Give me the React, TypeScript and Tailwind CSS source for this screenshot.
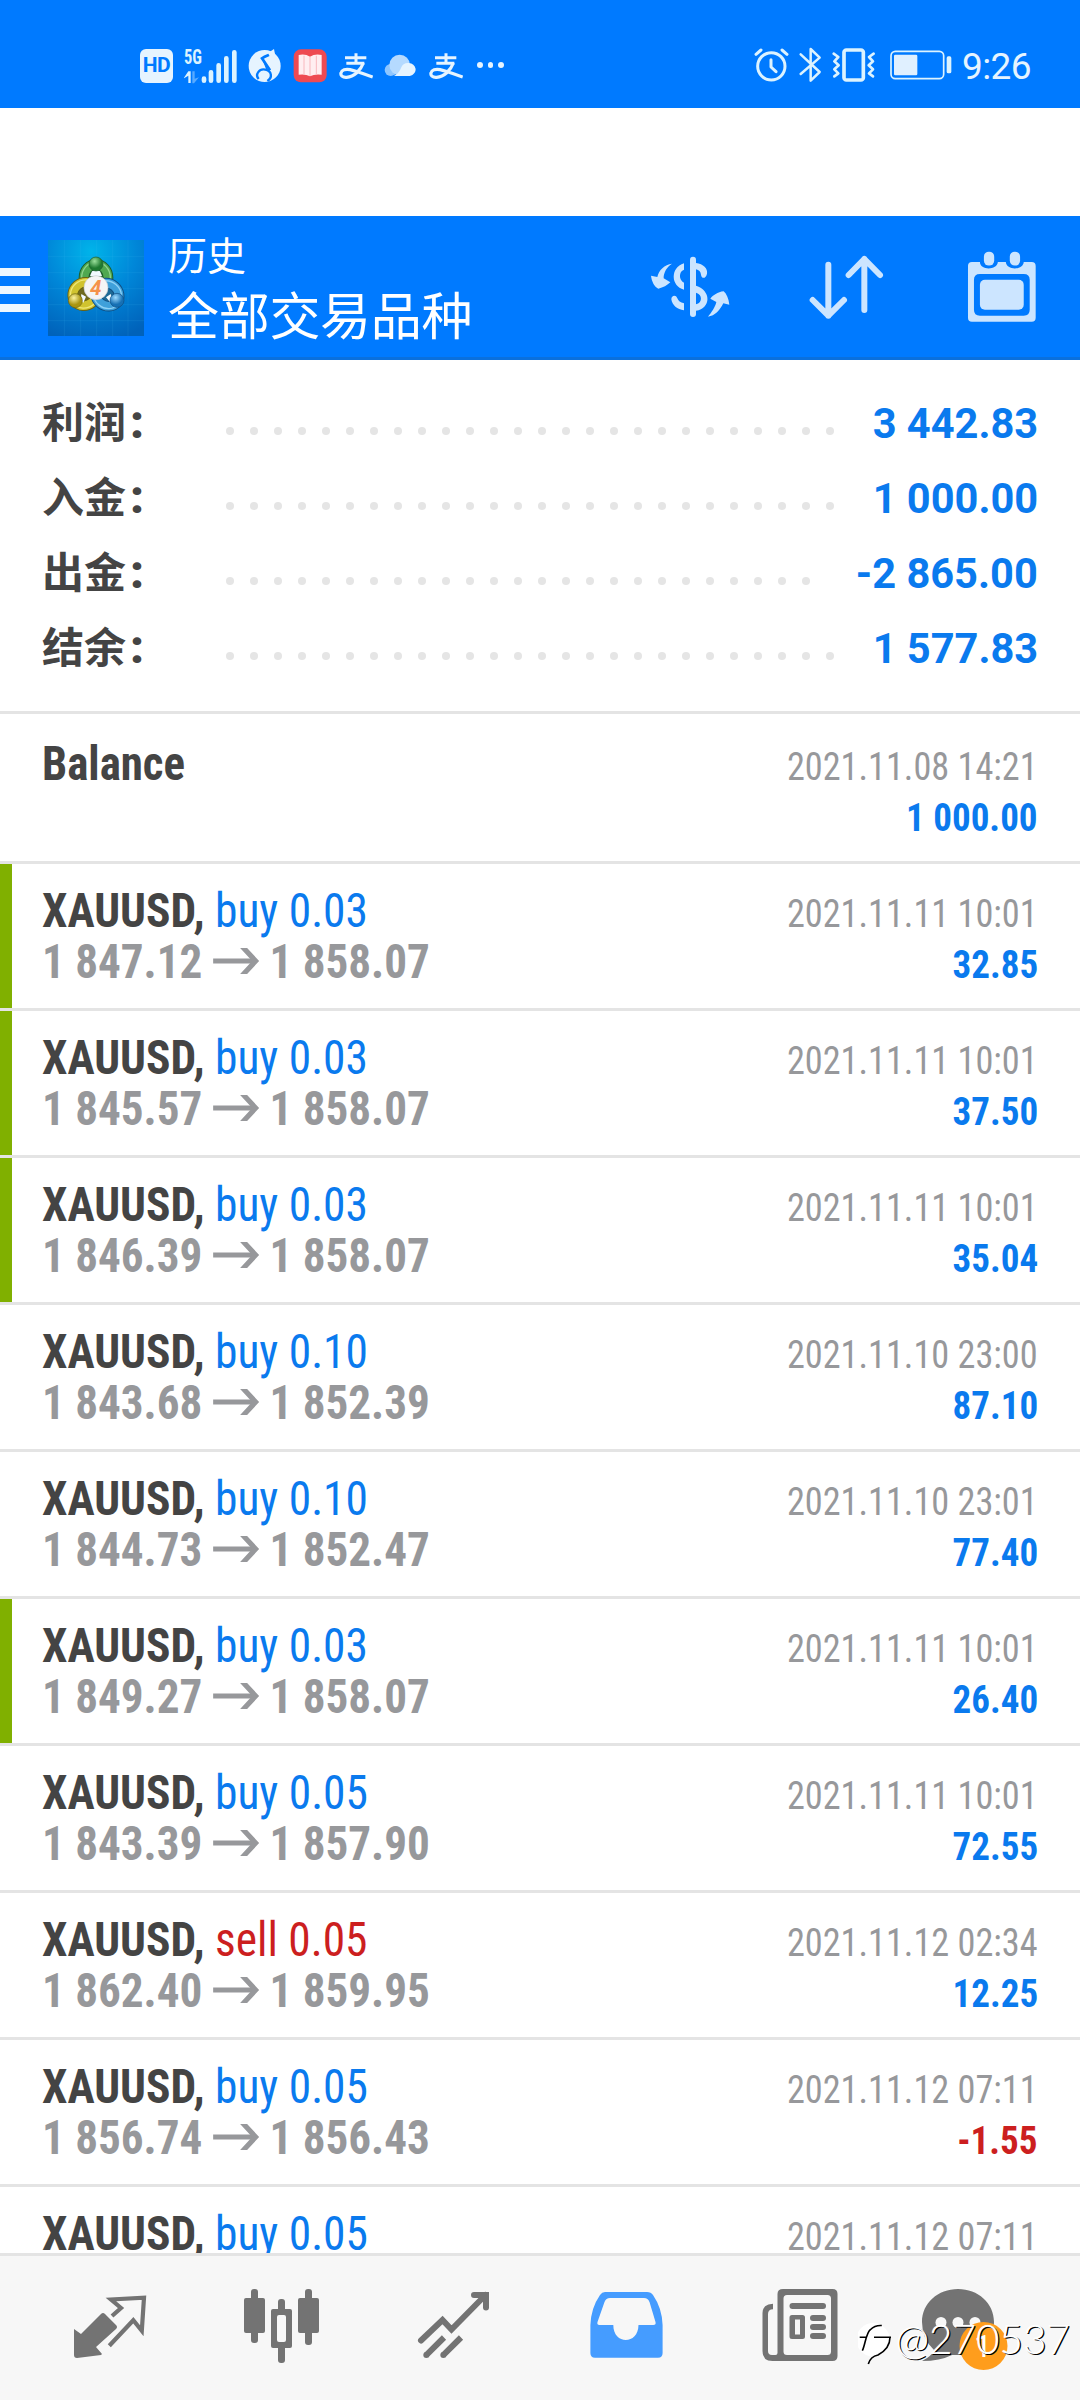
import React from 'react';
import clsx from 'clsx';

interface SummaryItem {
  label: string;
  value: string;
  dots: number;
}

interface Deal {
  side: 'buy' | 'sell';
  volume: string;
  open: string;
  close: string;
  time: string;
  profit: string;
  marked?: boolean;
}

const summary: SummaryItem[] = [
  { label: '利润', value: '3 442.83', dots: 26 },
  { label: '入金', value: '1 000.00', dots: 26 },
  { label: '出金', value: '-2 865.00', dots: 25 },
  { label: '结余', value: '1 577.83', dots: 26 },
];

const deals: Deal[] = [
  { side: 'buy', volume: '0.03', open: '1 847.12', close: '1 858.07', time: '2021.11.11 10:01', profit: '32.85', marked: true },
  { side: 'buy', volume: '0.03', open: '1 845.57', close: '1 858.07', time: '2021.11.11 10:01', profit: '37.50', marked: true },
  { side: 'buy', volume: '0.03', open: '1 846.39', close: '1 858.07', time: '2021.11.11 10:01', profit: '35.04', marked: true },
  { side: 'buy', volume: '0.10', open: '1 843.68', close: '1 852.39', time: '2021.11.10 23:00', profit: '87.10' },
  { side: 'buy', volume: '0.10', open: '1 844.73', close: '1 852.47', time: '2021.11.10 23:01', profit: '77.40' },
  { side: 'buy', volume: '0.03', open: '1 849.27', close: '1 858.07', time: '2021.11.11 10:01', profit: '26.40', marked: true },
  { side: 'buy', volume: '0.05', open: '1 843.39', close: '1 857.90', time: '2021.11.11 10:01', profit: '72.55' },
  { side: 'sell', volume: '0.05', open: '1 862.40', close: '1 859.95', time: '2021.11.12 02:34', profit: '12.25' },
  { side: 'buy', volume: '0.05', open: '1 856.74', close: '1 856.43', time: '2021.11.12 07:11', profit: '-1.55' },
  // only the first line of this one fits above the tab bar
  { side: 'buy', volume: '0.05', open: '', close: '', time: '2021.11.12 07:11', profit: '' },
];

const AlipayIcon = () => (
  <svg className="h-[26px] w-[34px]" viewBox="658 67 102 78" fill="none" stroke="#e6f4ff">
    <path d="M676 81h64M709 68v29M680 98h54" strokeWidth="9" />
    <path d="M731 97c-8 22-28 42-50 43c-13 1-19-6-17-13c2-9 14-13 27-10c22 5 43 14 68 22" strokeWidth="9.500" />
  </svg>
);

const StatusBar = () => (
  <div className="flex h-[108px] items-center bg-[#007aff] pr-[49px] pl-[140px] text-[#e6f4ff]">
    <div className="mt-[23px] flex h-[34px] w-[33px] items-center justify-center rounded-[6px] bg-[#e6f4ff] text-[21px] font-bold tracking-[-0.5px] text-[#007aff]">
      HD
    </div>
    {/* signal strength */}
    <svg className="mt-[23px] ml-[10px] h-[36px] w-[56px] overflow-visible" viewBox="190 48 168 108" fill="#dcf3ff">
      <text x="193" y="97" fontSize="60" fontWeight="700" textLength="54" lengthAdjust="spacingAndGlyphs" fontFamily="Roboto Condensed">5G</text>
      <path d="M193 137l13-19h7v35h-7v-22l-13 8z" />
      <path d="M218 118h7v22l13-4l-15 18h-5z" opacity=".4" />
      <path d="M253 140v6M274 121v25M297 100v46M320 79v67M344 61v85" stroke="#dcf3ff" strokeWidth="14" strokeLinecap="round" />
    </svg>
    <svg className="mt-[23px] ml-[9px] h-[34px] w-[34px]" viewBox="386 56 102 102">
      <circle cx="436" cy="107" r="48" fill="#e6f4ff" />
      <path d="M462 66c-8 9-20 8-34 18l24 36" fill="none" stroke="#007aff" strokeWidth="8" />
      <path d="M428 84l26 46l-14-14z" fill="#007aff" />
      <path d="M418 146c-12-14 2-32 20-28c20 4 22 24 6 34" fill="none" stroke="#007aff" strokeWidth="7" />
      <path d="M446 68l18-12l4 20l-14 8z" fill="#e6f4ff" />
    </svg>
    <svg className="mt-[23px] ml-[11px] h-[34px] w-[34px]" viewBox="520 56 102 102">
      <rect x="522" y="57" width="99" height="99" rx="22" fill="#ee4a52" />
      <path d="M537 74q20-4 34 5q14-9 35-5v59q-21-3-35 5q-14-8-34-5z" fill="#ffeef1" />
      <path d="M571 79v58M553 76v56M590 76v56" stroke="#f8b8be" strokeWidth="3" />
    </svg>
    <div className="mt-[23px] ml-[12px]"><AlipayIcon /></div>
    <svg className="mt-[23px] ml-[11px] h-[24px] w-[32px]" viewBox="793 72 96 70">
      <circle cx="813" cy="119" r="18" fill="#8ec6ff" />
      <circle cx="840" cy="104" r="31" fill="#b5daff" />
      <path d="M822 137c10-3 18-14 22-24a23 23 0 0 1 44 3c0 13-10 21-22 21z" fill="#e6f4ff" />
    </svg>
    <div className="mt-[23px] ml-[13px]"><AlipayIcon /></div>
    <div className="mt-[22px] ml-[14px] flex gap-[5px]">
      <i className="size-[5.5px] rounded-full bg-current" />
      <i className="size-[5.5px] rounded-full bg-current" />
      <i className="size-[5.5px] rounded-full bg-current" />
    </div>
    <svg className="mt-[22px] ml-auto h-[36px] w-[200px]" viewBox="40 53 600 108" fill="none" stroke="#dcf3ff" strokeLinecap="round" strokeLinejoin="round">
      <g strokeWidth="9">
        <circle cx="95" cy="111" r="41" />
        <path d="M94 91v22l15 14M49 75l15-13M127 62l15 13" />
      </g>
      <path d="M183 75l57 53l-27 26V59l27 26l-57 49" strokeWidth="7.500" />
      <rect x="313" y="62" width="58" height="90" rx="7" strokeWidth="11" />
      <path d="M282 73l14 10l-12 13l13 12l-13 12l12 12l-12 9M402 73l-14 10l12 13l-13 12l13 12l-12 12l12 9" strokeWidth="8" />
      <rect x="454" y="66" width="158" height="82" rx="13" strokeWidth="5" />
      <rect x="463" y="76" width="70" height="62" rx="4" fill="#e0f0ff" stroke="none" />
      <rect x="621" y="81" width="14" height="51" rx="5" fill="#dcf3ff" stroke="none" />
    </svg>
    <span className="mt-[24px] ml-[9px] w-[69px] text-[37px] leading-none tracking-[-0.6px]">9:26</span>
  </div>
);

const AppLogo = () => (
  <svg className="mt-[3px] ml-[18px] size-24" viewBox="24 30 288 288">
    <defs>
      <radialGradient id="sky" cx=".45" cy=".12" r=".95">
        <stop offset="0" stopColor="#00b4ea" />
        <stop offset=".5" stopColor="#0086d8" />
        <stop offset="1" stopColor="#0062ba" />
      </radialGradient>
      <radialGradient id="green" cx=".4" cy=".3"><stop offset="0" stopColor="#9be09b" /><stop offset="1" stopColor="#1f7a30" /></radialGradient>
      <radialGradient id="gold" cx=".4" cy=".3"><stop offset="0" stopColor="#fbf3a0" /><stop offset="1" stopColor="#a89410" /></radialGradient>
      <radialGradient id="blue" cx=".4" cy=".3"><stop offset="0" stopColor="#9edbff" /><stop offset="1" stopColor="#1670b4" /></radialGradient>
    </defs>
    <path d="M24 30h288v288H24z" fill="url(#sky)" />
    <path d="M73 30v288M122 30v288M170 30v288M218 30v288M264 30v288M24 80h288M24 128h288M24 176h288M24 224h288M24 272h288" stroke="#4fc4f5" strokeOpacity=".18" strokeWidth="2" />
    <ellipse cx="168" cy="143" rx="36" ry="40" fill="#2d6b35" stroke="#1c5c2c" strokeWidth="32" />
    <ellipse cx="168" cy="143" rx="36" ry="40" fill="none" stroke="#4fa850" strokeWidth="26" />
    <ellipse cx="168" cy="143" rx="43" ry="47" fill="none" stroke="#8fd28c" strokeWidth="4" />
    <ellipse cx="134" cy="192" rx="37" ry="34" transform="rotate(-40 134 192)" fill="#6f6b20" stroke="#6d6410" strokeWidth="32" />
    <ellipse cx="134" cy="192" rx="37" ry="34" transform="rotate(-40 134 192)" fill="none" stroke="#d0c32f" strokeWidth="26" />
    <ellipse cx="134" cy="192" rx="44" ry="41" transform="rotate(-40 134 192)" fill="none" stroke="#efe778" strokeWidth="4" />
    <ellipse cx="202" cy="194" rx="37" ry="33" transform="rotate(40 202 194)" fill="#1f6a96" stroke="#0f4f83" strokeWidth="32" />
    <ellipse cx="202" cy="194" rx="37" ry="33" transform="rotate(40 202 194)" fill="none" stroke="#3fa0da" strokeWidth="26" />
    <ellipse cx="202" cy="194" rx="44" ry="40" transform="rotate(40 202 194)" fill="none" stroke="#8fd2f6" strokeWidth="4" />
    <path d="M156 124q12-6 24 0l6 14h-36zM124 192l14 8l-8 18l-8-6zM212 192l-14 10l12 14l8-6z" fill="#f2faff" />
    <circle cx="168" cy="102" r="21" fill="url(#green)" stroke="#1c5c2c" strokeWidth="2" />
    <circle cx="106" cy="212" r="21" fill="url(#gold)" stroke="#6d6410" strokeWidth="2" />
    <circle cx="231" cy="211" r="21" fill="url(#blue)" stroke="#0f4f83" strokeWidth="2" />
    <circle cx="168" cy="173" r="36" fill="#f5f5f5" stroke="#c9cfd2" strokeWidth="2" />
    <text x="167" y="195" textAnchor="middle" fontSize="62" fontWeight="700" fontStyle="italic" fontFamily="Roboto" fill="#f5924a">4</text>
  </svg>
);

const Header = () => (
  <header className="flex h-36 items-center border-b-[3px] border-[#0a70dd] bg-[#007aff] pr-[42px] text-white">
    <div className="mt-[7px] flex w-[30px] flex-col gap-[10px]">
      <i className="h-2 bg-[#eef7ff]" />
      <i className="h-2 bg-[#eef7ff]" />
      <i className="h-2 bg-[#eef7ff]" />
    </div>
    <AppLogo />
    <div className="ml-6 self-start pt-[13px] font-['Noto_Sans_CJK_SC',sans-serif]">
      <div className="text-[39px] leading-[48px]">历史</div>
      <div className="mt-[6px] text-[51px] leading-[60px] tracking-[-0.3px]">全部交易品种</div>
    </div>
    <svg className="ml-auto h-[65px] w-20" viewBox="90 130 240 195" fill="#cce5ff">
      <path d="M219 147v163" stroke="#cce5ff" strokeWidth="18" strokeLinecap="round" />
      <path d="M192 158v19c-16 5-16 31 0 39v21c-40-10-42-66 0-79zM228 157c22 3 36 16 33 32c-3 16-17 16-18 3c-1-9-6-14-15-16zM228 225c46 14 46 68 0 75v-19c20-4 20-30 0-35zM192 278v21c-20-2-36-16-38-33c0-12 14-15 18-3c3 8 9 13 20 15z" />
      <path d="M156 159c-15 8-26 28-25 44l20 12c-9 9-22 16-36 19c-12-6-20-22-22-39l19 4c4-20 22-38 44-40zM264 318c10-12 22-29 25-44l-18-10c8-10 22-20 40-22c9 8 15 22 17 40l-18-4c-10 20-25 38-46 40z" />
    </svg>
    <svg className="ml-[77px] h-[67px] w-20" viewBox="560 129 240 201" fill="none" stroke="#cce5ff" strokeWidth="18" strokeLinecap="round" strokeLinejoin="round">
      <path d="M624 164v153M577 270l47 47l47-47M732 300V147M685 195l47-48l47 48" />
    </svg>
    <svg className="ml-[78px] h-[73px] w-[73px]" viewBox="1035 120 220 220" fill="#cce5ff">
      <path fillRule="evenodd" d="M1056 156h24c0 26 52 26 54 0h24c2 26 52 26 54 0h24q12 0 12 12v156q0 12-12 12h-180q-12 0-12-12v-156q0-12 12-12zM1080 192q-18 0-18 18v90q0 18 18 18h132q18 0 18-18v-90q0-18-18-18z" />
      <rect x="1080" y="210" width="132" height="90" rx="15" />
      <rect x="1092" y="125" width="31" height="42" rx="15" />
      <rect x="1170" y="125" width="31" height="42" rx="15" />
    </svg>
  </header>
);

const Summary = () => (
  <section className="h-[354px] border-b-[3px] border-[#e4e4e4] pt-[24px] pr-[42px] pl-[42px] text-[42px] font-bold">
    {summary.map((item) => (
      <div key={item.label} className="flex h-[75px] items-baseline leading-[75px]">
        <div className="flex w-[176px] items-baseline text-[#444]">
          <span className="font-['Noto_Sans_CJK_SC',sans-serif] leading-[60px]">{item.label}</span>
          <span className="ml-[4px] text-[47px] font-black">:</span>
        </div>
        <div className="mt-[19px] flex self-center">
          {Array.from({ length: item.dots }, (_, i) => (
            <i key={i} className="mx-2 size-2 rounded-full bg-[#e5e5e5]" />
          ))}
        </div>
        <span className="ml-auto origin-right scale-x-[0.99] text-[#0a7aee]">{item.value}</span>
      </div>
    ))}
  </section>
);

const timeClass = 'origin-right scale-x-[0.93] text-[39px] font-normal text-[#97989b]';
const profitClass = 'inline-block origin-right scale-x-[0.95] text-[39px] font-bold';

const DealRow = ({ deal }: { deal: Deal }) => (
  <div className="flex h-[147px] shrink-0 border-b-[3px] border-[#e4e4e4]">
    <div className={clsx('w-3', deal.marked && 'bg-[#80b000]')} />
    <div className="flex-1 pt-[21px] pr-[42px] pl-[30px] text-[48px] leading-[51px]">
      <div className="flex h-[51px] items-baseline justify-between">
        <div className="origin-left scale-x-[0.946] whitespace-pre">
          <span className="font-bold text-[#444]">XAUUSD, </span>
          <span className={deal.side === 'buy' ? 'text-[#0a7aee]' : 'text-[#cc1f1f]'}>
            {deal.side} {deal.volume}
          </span>
        </div>
        <span className={timeClass}>{deal.time}</span>
      </div>
      {deal.open && (
        <div className="flex h-[51px] items-baseline justify-between">
          <div className="flex origin-left scale-x-[0.94] items-baseline font-bold text-[#97989b]">
            <span className="w-[182px]">{deal.open}</span>
            <svg className="h-[30px] w-[49px]" viewBox="0 0 46 30" preserveAspectRatio="none" fill="none" stroke="currentColor" strokeWidth="5">
              <path d="M0 13h41" />
              <path d="M27 0h7l12 13l-12 13h-7l12-13z" fill="currentColor" stroke="none" />
            </svg>
            <span className="ml-[11px]">{deal.close}</span>
          </div>
          <span className={clsx(profitClass, deal.profit.startsWith('-') ? 'text-[#cc1f1f]' : 'text-[#0a7aee]')}>
            {deal.profit}
          </span>
        </div>
      )}
    </div>
  </div>
);

const History = () => (
  <section className="flex min-h-0 flex-1 flex-col overflow-hidden font-['Roboto_Condensed',Roboto,sans-serif]">
    <div className="h-[150px] shrink-0 border-b-[3px] border-[#e4e4e4] px-[42px] pt-6 text-[48px] leading-[51px]">
      <div className="flex h-[51px] items-baseline justify-between">
        <span className="origin-left scale-x-[0.935] font-bold text-[#444]">Balance</span>
        <span className={timeClass}>2021.11.08 14:21</span>
      </div>
      <div className="text-right">
        <span className={clsx(profitClass, 'text-[#0a7aee]')}>1 000.00</span>
      </div>
    </div>
    {deals.map((deal, i) => (
      <DealRow key={i} deal={deal} />
    ))}
  </section>
);

const BottomNav = () => (
  <nav className="relative flex h-[147px] shrink-0 border-t-[3px] border-[#e4e4e4] bg-[#f7f7f7] pl-[23px] text-[#737373]">
    {/* quotes */}
    <svg className="h-36 w-[173px]" viewBox="23 0 173 144" fill="currentColor">
      <path d="M74 73l7 5l20-20q2-2 4 0l11 11q2 2 0 4l-20 18l6 7l-1 1l-24 3q-3 0-3-3z" />
      <path d="M112 60l9-8l-10-8.5l33-1.8l-2.2 33l-8.5-10.500l-24 25.500" fill="none" stroke="currentColor" strokeWidth="4.2" />
    </svg>
    {/* charts */}
    <svg className="h-36 w-[173px]" viewBox="196 0 173 144" fill="currentColor">
      <rect x="244" y="42" width="21" height="35" rx="2" />
      <rect x="251" y="33" width="7" height="54" rx="3" />
      <rect x="298" y="42" width="21" height="35" rx="2" />
      <rect x="305" y="33" width="7" height="56" rx="3" />
      <rect x="278" y="43" width="7" height="64" rx="3" />
      <rect x="271" y="53" width="21" height="39" rx="2" />
      <rect x="277" y="59" width="9" height="27" rx="2" fill="#f7f7f7" />
    </svg>
    {/* trade */}
    <svg className="h-36 w-[173px]" viewBox="369 0 173 144" fill="none" stroke="currentColor" strokeWidth="6">
      <path d="M421 84.500l21.500-20.500l9 9.500l34-34.500M474 39h12v12.500" strokeLinecap="round" />
      <path d="M426 99.300l18-17.800M443 99.300l18-17.800" />
      <circle cx="426.300" cy="99" r="3" fill="currentColor" stroke="none" />
      <circle cx="443.300" cy="99" r="3" fill="currentColor" stroke="none" />
    </svg>
    {/* history */}
    <svg className="h-36 w-[173px]" viewBox="542 0 173 144" fill="#459cff">
      <path fillRule="evenodd" d="M605 36h42q4 0 6 3q9 13 9.600 30v28q0 4.700-4.600 4.700h-63q-4.600 0-4.600-4.700v-28q.6-17 9.600-30q2-3 5-3zM610 42q-4 0-5.500 4l-7 20q-.8 3 2 3h13.800c0 20 25 20 25.200 0h14.800q3 0 2.200-3l-6-20q-1.500-4-5.500-4z" />
    </svg>
    {/* news */}
    <svg className="h-36 w-[173px]" viewBox="715 0 173 144" fill="currentColor">
      <path fillRule="evenodd" d="M783 33h49.500q5 0 5 5v62q0 5-5 5h-60q-10 0-10-10v-38q0-9 10.500-9.300v5.600q-5 0-5 4.700v37q0 4 4 4h3.500q2 0 2-2v-59q0-5 5.500-5zM787 39q-3.500 0-3.500 3.500v53q0 3.500 3.500 3.500h40.500q3.500 0 3.500-3.500v-53q0-3.500-3.500-3.500z" />
      <rect x="789.500" y="47" width="36.500" height="6" rx="3" />
      <path fillRule="evenodd" d="M792 59h10.500q2.500 0 2.500 2.500v19q0 2.500-2.500 2.500h-10.500q-2.500 0-2.500-2.500v-19q0-2.500 2.500-2.500zM795 63.500v15h5v-15z" />
      <rect x="810" y="59" width="16" height="6" rx="3" />
      <rect x="810" y="68" width="16" height="6" rx="3" />
      <rect x="810" y="77" width="16" height="6" rx="3" />
    </svg>
    {/* messages */}
    <svg className="h-36 w-[173px]" viewBox="888 0 173 144" fill="currentColor">
      <path d="M958 33c20 0 36 14 36 33s-12 33-34 33h-8q-12 6-30 6q10-5 12-11q-12-11-12-28c0-19 16-33 36-33z" />
      <g fill="#f7f7f7">
        <circle cx="941" cy="66.500" r="5.500" />
        <circle cx="958" cy="66.500" r="5.500" />
        <circle cx="975" cy="66.500" r="5.500" />
      </g>
      <circle cx="983.500" cy="90" r="24" fill="#ff9d1c" />
      <text x="983" y="101" textAnchor="middle" fontSize="32" fontFamily="Roboto" fill="#fff">1</text>
    </svg>
    {/* watermark */}
    <div className="absolute top-[57px] right-[10px] flex items-center text-white">
      <svg className="h-[52px] w-[38px]" viewBox="0 -2 38 52" fill="none">
        <circle cx="15" cy="24.700" r="16.700" fill="#fff" />
        <path d="M4.300 35.700c3-6 3.500-17 8-21c3-3 7-4.500 11.500-4.200M1.700 22.300h7M16 22.300h17M32 22.300c0 8-5 14-12 17.700c-5 1-8 3-9.700 9" stroke="#000" strokeWidth="1.600" />
      </svg>
      <span className="font-['Lato',sans-serif] text-[40.5px] leading-[50px] font-light [text-shadow:1.2px_1.2px_0_#000,0_0_1px_#fff]">
        @270537
      </span>
    </div>
  </nav>
);

const App: React.FC = () => {
  return (
    <div className="flex h-[2400px] w-[1080px] flex-col overflow-hidden bg-white font-[Roboto,sans-serif]">
      <StatusBar />
      <div className="h-[108px] shrink-0" />
      <Header />
      <Summary />
      <History />
      <BottomNav />
    </div>
  );
};

export default App;
